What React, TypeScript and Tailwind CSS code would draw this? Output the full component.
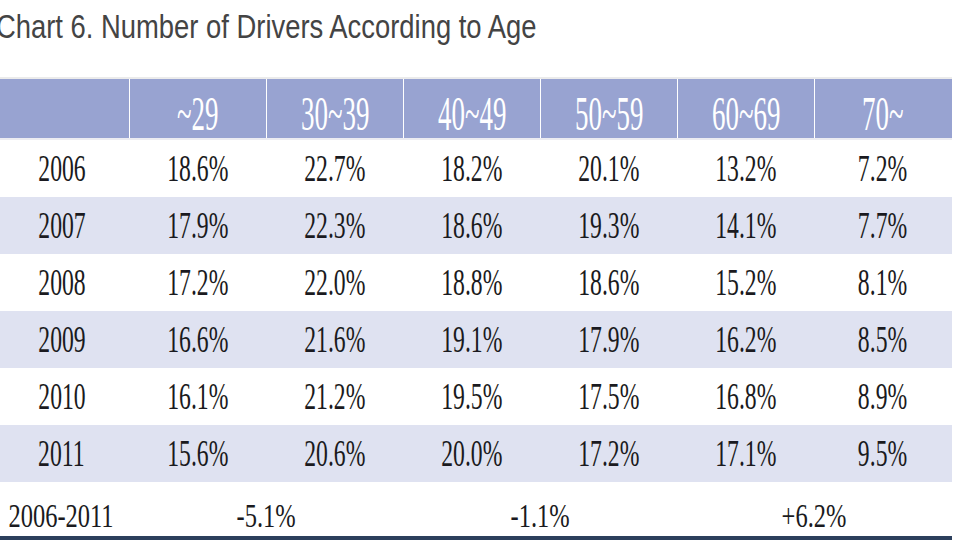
const HEAD = ["~29", "30~39", "40~49", "50~59", "60~69", "70~"];

const ROWS: [string, string[]][] = [
  ["2006", ["18.6%", "22.7%", "18.2%", "20.1%", "13.2%", "7.2%"]],
  ["2007", ["17.9%", "22.3%", "18.6%", "19.3%", "14.1%", "7.7%"]],
  ["2008", ["17.2%", "22.0%", "18.8%", "18.6%", "15.2%", "8.1%"]],
  ["2009", ["16.6%", "21.6%", "19.1%", "17.9%", "16.2%", "8.5%"]],
  ["2010", ["16.1%", "21.2%", "19.5%", "17.5%", "16.8%", "8.9%"]],
  ["2011", ["15.6%", "20.6%", "20.0%", "17.2%", "17.1%", "9.5%"]],
];

const serif = "font-['Liberation_Serif',serif]";

function Cell({ text, first }: { text: string; first?: boolean }) {
  return (
    <div className={`flex items-center justify-center ${first ? "pr-[6px]" : ""}`}>
      <span className={`inline-block whitespace-nowrap scale-x-[0.64] text-[37px] leading-none text-[#1a1a20] ${serif}`}>
        {text}
      </span>
    </div>
  );
}

export default function App() {
  return (
    <div className="w-[960px] h-[540px] overflow-hidden bg-white">
      <div className="h-[77px] pt-[6px]">
        <h1 className="-ml-[4px] inline-block origin-left whitespace-nowrap scale-x-[0.83] text-[33px] leading-[42px] text-[#444444] font-['Liberation_Sans',sans-serif]">
          Chart 6. Number of Drivers According to Age
        </h1>
      </div>

      <div className="w-[952px] border-t-2 border-[#ebebeb]">
        {/* header */}
        <div className="grid grid-cols-[129px_repeat(6,137px)] h-[61px] bg-[#98a3d1] border-b-2 border-[#ececf2]">
          <div />
          {HEAD.map((h) => (
            <div key={h} className="flex items-center justify-center border-l border-white pt-[10px]">
              <span className={`inline-block whitespace-nowrap scale-x-[0.55] text-[49px] leading-none text-white ${serif}`}>{h}</span>
            </div>
          ))}
        </div>

        {/* data rows */}
        {ROWS.map(([year, vals], i) => (
          <div
            key={year}
            className={`grid grid-cols-[129px_repeat(6,137px)] h-[57px] ${i % 2 === 1 ? "bg-[#dfe2f1]" : "bg-white"}`}
          >
            <Cell text={year} first />
            {vals.map((v, j) => (
              <Cell key={j} text={v} />
            ))}
          </div>
        ))}

        {/* change row */}
        <div className="grid grid-cols-[129px_repeat(3,274px)] h-[58px] border-b-[4px] border-[#2c3f5c]">
          {["2006-2011", "-5.1%", "-1.1%", "+6.2%"].map((t, i) => (
            <div key={t} className={`flex items-center justify-center pt-[14px] ${i === 0 ? "pr-[7px]" : ""}`}>
              <span className={`inline-block whitespace-nowrap scale-x-[0.72] text-[34px] leading-none text-[#1a1a20] ${serif}`}>{t}</span>
            </div>
          ))}
        </div>
      </div>
    </div>
  );
}
